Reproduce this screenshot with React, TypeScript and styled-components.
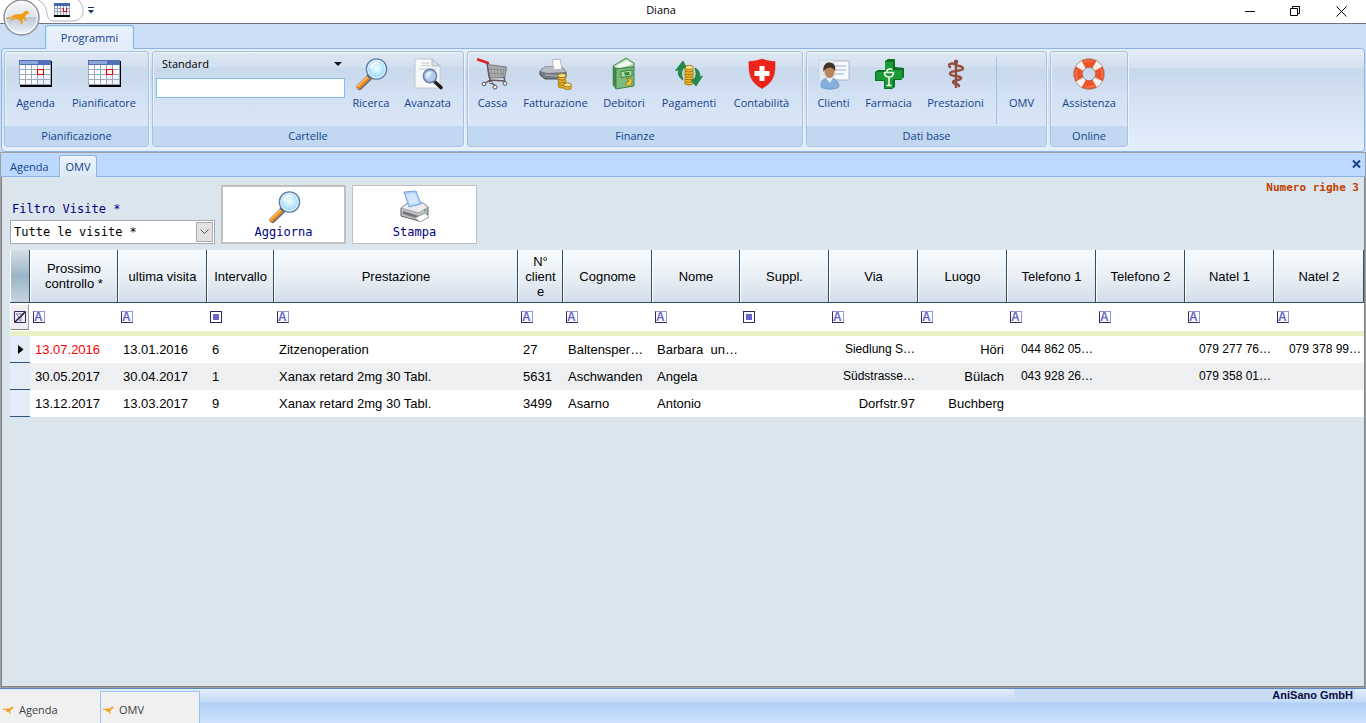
import React from 'react';
import styled, { createGlobalStyle, css } from 'styled-components';

const uiFont = '"Open Sans", "Noto Sans", sans-serif';
const monoFont = '"DejaVu Sans Mono", "Liberation Mono", monospace';
const gridFont = '"Liberation Sans", Arial, sans-serif';

const GlobalStyle = createGlobalStyle`
  *, *::before, *::after { box-sizing: border-box; }
  body { margin: 0; font-family: ${uiFont}; font-size: 11px; color: #15428b; background: #cbdef6; }
  button, input, select { font: inherit; color: inherit; margin: 0; padding: 0; border-radius: 0; }
  button { background: none; border: 0; cursor: pointer; }
  svg { display: block; flex: none; }
`;

const Window = styled.div`
  min-height: 100vh;
  display: flex;
  flex-direction: column;
  position: relative;
`;

/* ---------- title bar ---------- */

const TitleBar = styled.header`
  height: 24px;
  display: flex;
  background: #fff;
  border-bottom: 1px solid #6f7480;
`;

const QuickAccess = styled.div`
  width: 96px;
  display: flex;
  align-items: flex-start;
  padding-left: 38px;
`;

const QuickButton = styled.button`
  height: 22px;
  display: flex;
  align-items: center;
`;

const MoreButton = styled(QuickButton)`
  height: 20px;
  padding: 0 4px;
`;

const Title = styled.h1`
  flex: 1;
  margin: 0;
  font-size: 11px;
  font-weight: 400;
  line-height: 20px;
  text-align: center;
  color: #000;
`;

const WindowButtons = styled.div`
  display: flex;
  padding-right: 2px;
`;

const WindowButton = styled.button`
  width: 46px;
  display: flex;
  align-items: center;
  justify-content: center;
`;

const Orb = styled.button`
  position: absolute;
  left: 3px;
  top: 0;
  z-index: 2;
`;

/* ---------- ribbon ---------- */

const RibbonTabs = styled.nav`
  height: 24px;
  display: flex;
  align-items: flex-end;
  padding-left: 45px;
  background: #cbdef6;
`;

const RibbonTab = styled.button`
  height: 24px;
  margin-bottom: -1px;
  width: 89px;
  position: relative;
  line-height: 23px;
  white-space: nowrap;
  display: flex;
  justify-content: center;
  border: 1px solid #8db2e3;
  border-bottom: 0;
  border-radius: 3px 3px 0 0;
  background: linear-gradient(#e9f2fc, #e2ebf8);
  box-shadow: inset 1px 1px 0 #c8f0fa, inset -1px 0 0 #c8f0fa;
`;

const Ribbon = styled.section`
  margin: 0 1px;
  padding: 2px 2px 4px;
  display: flex;
  gap: 3px;
  border: 1px solid #8db2e3;
  border-radius: 4px;
  background: linear-gradient(#e6edf7 0, #d4e0f0 19px, #c7d8eb 20px, #d4e2f3 50%, #e4effd 100%);
`;

const Group = styled.section<{ $width: number }>`
  min-width: ${p => p.$width}px;
  height: 96px;
  display: flex;
  flex-direction: column;
  border: 1px solid #a5c3de;
  border-radius: 3px;
  background: linear-gradient(#dfe8f3 0, #d2dfef 15px, #c8d9eb 16px, #d2e1f3 45px, #dfebfb 100%);
  box-shadow: inset 1px 1px 0 #e9f1fa, 1px 1px 0 #edf4fd;
`;

const GroupBody = styled.div`
  flex: 1;
  display: flex;
  padding: 0 3px;
`;

const GroupCaption = styled.h2`
  margin: 0;
  height: 20px;
  font-size: 11px;
  font-weight: 400;
  line-height: 20px;
  text-align: center;
  background: #c1d8f0;
`;

const ToolButton = styled.button<{ $width: number }>`
  width: ${p => p.$width}px;
  padding-top: 6px;
  display: flex;
  flex-direction: column;
  align-items: center;
  gap: 5px;
  line-height: 16px;
  white-space: nowrap;
`;

const IconSlot = styled.span`
  width: 34px;
  height: 32px;
  display: flex;
  align-items: center;
  justify-content: center;
`;

const Divider = styled.span`
  width: 1px;
  margin: 5px 4px 2px 5px;
  background: #9dc4f2;
`;

const SearchBox = styled.div`
  width: 189px;
  margin-right: 2px;
  display: flex;
  flex-direction: column;
`;

const PlainSelectWrap = styled.label`
  height: 26px;
  display: flex;
  align-items: center;
  justify-content: space-between;
  padding: 0 3px 3px 6px;
`;

const PlainSelect = styled.select`
  flex: 1;
  appearance: none;
  border: 0;
  background: transparent;
  color: #000;
`;

const SearchInput = styled.input`
  height: 20px;
  width: 100%;
  padding: 0 4px;
  border: 1px solid #7cc0f0;
  background: #fff;
`;

/* ---------- document area ---------- */

const Frame = styled.main`
  flex: 1;
  display: flex;
  flex-direction: column;
  border: 1px solid #a0a0a0;
`;

const DocTabs = styled.nav`
  height: 24px;
  display: flex;
  align-items: flex-end;
  border-bottom: 1px solid #8db2e3;
  background: #bdd9ff;
`;

const DocTab = styled.button<{ $active?: boolean }>`
  height: 22px;
  line-height: 22px;
  padding: 0 6px;
  min-width: 38px;
  ${p => p.$active ? css`
    margin-bottom: -1px;
    border: 1px solid #8db2e3;
    border-bottom: 0;
    border-radius: 3px 3px 0 0;
    background: linear-gradient(#eaf3fd, #dde8f4);
    box-shadow: inset 1px 1px 0 #f4fbff;
    padding: 0 5px;
    line-height: 20px;
  ` : css`
    width: 58px;
    padding: 2px 11px 0 9px;
  `}
`;

const DocClose = styled.button`
  margin-left: auto;
  width: 18px;
  height: 24px;
  display: flex;
  align-items: center;
  justify-content: center;
`;

const Page = styled.div`
  flex: 1;
  border: 1px solid #848484;
  border-top: 0;
  background: #dbe5ed;
`;

const Toolbar = styled.div`
  min-height: 73px;
  display: flex;
  align-items: flex-end;
  gap: 6px;
  padding: 2px 5px 6px 8px;
  font-family: ${monoFont};
  font-size: 12px;
  color: #000080;
`;

const Filter = styled.div`
  width: 205px;
  display: flex;
  flex-direction: column;
  gap: 3px;
  line-height: 16px;
`;

const FilterLabel = styled.label`
  padding-left: 2px;
`;

const FilterSelectWrap = styled.div`
  height: 24px;
  display: flex;
  border: 1px solid #a9a9b0;
  background: #fff;
  padding: 1px;
`;

const FilterSelect = styled.select`
  flex: 1;
  appearance: none;
  border: 0;
  padding-left: 2px;
  background: #fff;
  color: #000;
`;

const DropArrow = styled.span`
  width: 17px;
  display: flex;
  align-items: center;
  justify-content: center;
  border: 1px solid #adadad;
  background: #e1e1e1;
`;

const ActionButton = styled.button<{ $default?: boolean }>`
  width: 125px;
  height: 59px;
  display: flex;
  flex-direction: column;
  align-items: center;
  justify-content: center;
  border: ${p => (p.$default ? 2 : 1)}px solid #c0c0c0;
  background: #fff;
  line-height: 16px;
`;

const RowCount = styled.output`
  margin-left: auto;
  align-self: flex-start;
  font-size: 11px;
  font-weight: 700;
  line-height: 18px;
  color: #c04000;
`;

/* ---------- grid ---------- */

const Table = styled.table`
  width: calc(100% - 8px);
  margin-left: 8px;
  table-layout: fixed;
  border-collapse: separate;
  border-spacing: 0;
  font-family: ${gridFont};
  font-size: 13px;
  color: #000;
  background: #fff;
`;

const HeadCell = styled.th`
  height: 53px;
  padding: 0 5px 0 6px;
  font-weight: 400;
  line-height: 15px;
  overflow-wrap: anywhere;
  border-right: 1px solid #2c4f6c;
  border-bottom: 1px solid #2c4f6c;
  background: linear-gradient(#f8fcfd, #e9eff5 50%, #d4ddea);
  box-shadow: inset 1px 0 0 #fff;
`;

const CornerCell = styled(HeadCell)`
  background: linear-gradient(#d3dfe6, #9bb5c7 50%, #c5d4df);
`;

const FilterCell = styled.td`
  height: 33px;
  padding: 0 3px 1px;
  border-bottom: 5px solid #e8f0c6;
`;

const FilterCorner = styled.td`
  height: 33px;
  padding: 0 1px 1px 0;
  border-bottom: 5px solid #e8f0c6;
`;

const ClearFilter = styled.button`
  width: 19px;
  height: 26px;
  display: flex;
  align-items: center;
  justify-content: center;
  background: #efefef;
  border: 1px solid #fff;
  border-right-color: #a0a0a0;
  border-bottom-color: #808080;
`;

const TextFilter = styled.button`
  width: 12px;
  height: 12px;
  display: block;
  border: 1px solid #9a94cf;
  border-left-color: #2b2b66;
  border-bottom-color: #2b2b66;
  color: #6a66cc;
  font-size: 12px;
  font-weight: 700;
  line-height: 10px;
  text-align: left;
`;

const ValueFilter = styled.button`
  width: 12px;
  height: 12px;
  display: block;
  border: 1px solid #2b2b66;
  background: #6a66cc content-box;
  padding: 2px;
`;

const Selector = styled.td`
  height: 27px;
  padding: 0 0 0 8px;
  background: #e4ecf7;
  border-bottom: 1px solid #2f5580;
`;

const Row = styled.tr`
  &:nth-child(even) { background: #eeeff1; }
`;

const Cell = styled.td<{ $right?: boolean; $due?: boolean; $small?: boolean }>`
  height: 27px;
  padding: ${p => (p.$right ? '0 3px 0 0' : '0 0 0 5px')};
  padding-bottom: ${p => (p.$small ? 2 : 0)}px;
  white-space: pre;
  text-align: ${p => (p.$right ? 'right' : 'left')};
  color: ${p => (p.$due ? '#f00' : '#000')};
  font-size: ${p => (p.$small ? 12 : 13)}px;
`;

/* ---------- status bar ---------- */

const StatusBar = styled.footer`
  height: 35px;
  display: flex;
  align-items: flex-start;
  border-top: 1px solid #5b86c0;
  background: linear-gradient(#e2edfb 0, #c4dbf8 13px, #b0cff6 14px, #cfe2fb 100%);
`;

const TaskButton = styled.button<{ $active?: boolean }>`
  width: 100px;
  height: 32px;
  margin-top: 2px;
  padding-left: 2px;
  display: flex;
  align-items: center;
  gap: 5px;
  padding-top: 4px;
  background: #f0f0f0;
  border: 1px solid ${p => (p.$active ? '#99c2f8' : '#f0f0f0')};
  border-bottom: 0;
  color: #404040;
`;

const Company = styled.p`
  width: 341px;
  margin: 0 11px 0 auto;
  padding-right: 2px;
  font-family: ${gridFont};
  font-size: 11px;
  font-weight: 700;
  line-height: 12px;
  text-align: right;
  color: #0a0a45;
  background: #c9def4;
`;

/* ---------- icons ---------- */

const SmallCheetah = () => (
  <svg width="11" height="8" viewBox="0 0 11 8" aria-hidden="true">
    <path fill="#f39c12" d="M0 2.800h4L7 2.600 8 1l2-.5.5 1.500-2 1L8 4.200 7 5l.5 2.500-1 .5-.8-2.600L3 5.800 3.600 4 0 3.800z" />
  </svg>
);

const OrbArt = () => (
  <svg width="37" height="36" viewBox="0 0 37 36" aria-hidden="true">
    <defs>
      <linearGradient id="orb" x1="0" y1="0" x2="0" y2="1">
        <stop offset="0" stopColor="#f7f8fa" /><stop offset=".48" stopColor="#dfe3ea" />
        <stop offset=".5" stopColor="#bcc6d6" /><stop offset="1" stopColor="#f4f8fd" />
      </linearGradient>
    </defs>
    <circle cx="18.5" cy="17.5" r="17.5" fill="url(#orb)" stroke="#8f8f93" strokeWidth="1.4" />
    <circle cx="18.5" cy="17.5" r="15.8" fill="none" stroke="#fff" strokeWidth="1.200" opacity=".8" />
    <path fill="#f39c12" d="M3 18.500 8 16.800 11.500 14.600 16 14.200 19.500 13.400 21.500 11.400 24 10.800 26.400 12.200 25.400 13.800 23.200 14.400 22 17 23.800 20.200 22.800 21 20.400 18.600 19.400 20 19.800 22.800 18 24.800 17.400 24 18 22.400 16.800 20.200 12.800 18.600 11 19.600 7.500 20.400 7 19.600 9.800 18.200 10.400 17 8.600 17.600 3.400 19.200z" />
  </svg>
);

const CalendarIcon = () => (
  <svg width="33" height="28" viewBox="0 0 33 28" aria-hidden="true">
    <path fill="#000" d="M1 25h31V1h1v26H1z" />
    <path fill="#fff" d="M0 5h32v20H0z" />
    <path fill="#e6eaf5" d="M18 15h14v10H18z" opacity=".7" />
    <path fill="#4f6fb6" d="M0 0h32v5H0z" />
    <path fill="#8fa6d8" d="M1 1h18v3H1z" />
    <path stroke="#9ba6bf" fill="none" d="M.5 5v20M6.500 5v20M12.500 5v20M18.500 5v20M24.500 5v20M31.500 5v20M0 9.500h32M0 14.500h32M0 19.500h32M0 24.500h32" />
    <path stroke="#e60000" strokeWidth="1.200" fill="#fff" d="M18.500 9.500h6v5h-6z" />
  </svg>
);

const MagnifierIcon = () => (
  <svg width="34" height="34" viewBox="0 0 34 34" aria-hidden="true">
    <defs>
      <radialGradient id="lens" cx=".5" cy=".45" r=".6">
        <stop offset="0" stopColor="#f2fdff" /><stop offset=".5" stopColor="#bfe9fc" /><stop offset="1" stopColor="#7fc4ee" />
      </radialGradient>
    </defs>
    <path d="M16 20 5.500 30" stroke="#6c6f80" strokeWidth="6" strokeLinecap="round" />
    <path d="M14.500 20.500 4.500 30" stroke="#f08a18" strokeWidth="4" strokeLinecap="round" />
    <path d="M13.500 20 4 29" stroke="#ffc46a" strokeWidth="1.500" strokeLinecap="round" />
    <path d="m14 20 3-3" stroke="#50597a" strokeWidth="4" />
    <circle cx="22.500" cy="12" r="10" fill="url(#lens)" stroke="#5d7eaa" strokeWidth="1.600" />
    <circle cx="22.500" cy="12" r="8.800" fill="none" stroke="#dff2fb" strokeWidth="1.200" />
    <path d="M17 10c1-3 4-5 7-4" fill="none" stroke="#fff" strokeWidth="2" strokeLinecap="round" />
  </svg>
);

const AdvancedIcon = () => (
  <svg width="32" height="34" viewBox="0 0 32 34" aria-hidden="true">
    <path d="M3 2h17l8 7v22H3z" fill="#f7f8f9" stroke="#c2c6cb" />
    <path d="M20 2v7h8z" fill="#d9dce1" stroke="#b4b8be" />
    <path d="M9 6h9M9 8.500h9M7 12h18" stroke="#c9cdd2" />
    <path d="m23 25 6 5.500" stroke="#1c1c20" strokeWidth="3.600" strokeLinecap="round" />
    <circle cx="18" cy="19" r="6.600" fill="#b3cdf0" stroke="#6f84a5" strokeWidth="1.600" />
    <path d="M13.500 18c1-3 4-4 7-3l-5 7z" fill="#dcebfb" />
  </svg>
);

const CartIcon = () => (
  <svg width="32" height="32" viewBox="0 0 32 32" fill="none" aria-hidden="true">
    <path d="m1 1.500 10 3.500" stroke="#e02020" strokeWidth="2.600" strokeLinecap="round" />
    <path d="M10 6.500 29.500 9 28 19.500l-16 .5z" fill="#b4b4b7" stroke="#77777b" />
    <path d="m13.500 8 1.500 11.500M17 8.500l1 11M20.500 8.500l.5 11M24 9v10M27 9l-1 10M11 11l18 1M11.500 15.500h17" stroke="#8c8c90" />
    <path d="m10 5 3 17-6 4M13 22l15 1M27 19l1 5M12 23l7 5" stroke="#66555a" strokeWidth="1.400" />
    <circle cx="7" cy="26" r="1.800" fill="#fff" stroke="#505058" /><circle cx="18" cy="29" r="2" fill="#fff" stroke="#505058" />
    <circle cx="28" cy="25.500" r="1.800" fill="#fff" stroke="#505058" /><circle cx="14" cy="24.500" r="1.300" fill="#fff" stroke="#505058" />
  </svg>
);

const Coins = ({ x, y, n, rx = 4 }: { x: number; y: number; n: number; rx?: number }) => (
  <g>
    {Array.from({ length: n }, (_, i) => (
      <ellipse key={i} cx={x} cy={y - i * 2.6} rx={rx} ry="2" fill={i === n - 1 ? '#ffe680' : '#f1b927'} stroke="#8a6212" strokeWidth=".8" />
    ))}
  </g>
);

const InvoiceIcon = () => (
  <svg width="34" height="32" viewBox="0 0 34 32" aria-hidden="true">
    <path d="m1 13 5-4 17 0 4 5v5l-4 2H6l-5-4z" fill="#777a80" stroke="#4d5056" />
    <path d="m1 13 5-4h17l4 5-19 1z" fill="#b9bcc2" />
    <path d="m13 2 8-1 2 10-8 1z" fill="#fdfdfd" stroke="#b3b7be" />
    <path d="m6 17 15 1" stroke="#a4a7ad" strokeWidth="1.500" />
    <Coins x={23} y={28} n={5} /><Coins x={28.500} y={29.500} n={2} />
  </svg>
);

const DebtorsIcon = () => (
  <svg width="30" height="34" viewBox="0 0 30 34" aria-hidden="true">
    <path d="M4 9 17 1l8 5v4L7 12z" fill="#a6d6a2" stroke="#4b8f4b" />
    <path d="m6 9 12-6 6 4-13 4z" fill="#f4f8f2" />
    <path d="m4 9 3 3v20l-3-4z" fill="#3f8a48" stroke="#35783c" strokeWidth=".5" />
    <path d="m7 12 18-2v19L7 32z" fill="#7cba7e" stroke="#3f8546" />
    <path d="m12 14.500 11-1.500v6l-11 1.500z" fill="#aee0a6" stroke="#387c3e" />
    <path d="m15 15.500 5-.5 1 3-5 .5z" fill="#398742" />
    <path d="M17 21c4 2 7-1 6 4s-5 5-6 2 3-1 3-3z" fill="#f0c53c" stroke="#94701c" strokeWidth=".8" />
  </svg>
);

const PaymentsIcon = () => (
  <svg width="30" height="30" viewBox="0 0 30 30" aria-hidden="true">
    <Coins x={15} y={24} n={7} rx={4.500} />
    <path d="M9 21C4 18 3.500 13 5 10.500L1.500 11.500 9 2l3 6-3 1.500C7 13 7.500 17 9 21z" fill="#1f8f4a" stroke="#12682f" strokeWidth=".7" />
    <path d="M21 9c4 2 5.500 6 4.500 9.500l3-1.500L22 27l-4.500-5.500 3-1.500c2-3 2-7 .5-11z" fill="#1f8f4a" stroke="#12682f" strokeWidth=".7" />
  </svg>
);

const SwissIcon = () => (
  <svg width="28" height="32" viewBox="0 0 28 32" aria-hidden="true">
    <path d="M1 3.500C5 3.500 10 2.500 14 1c4 1.500 9 2.500 13 2.500.5 13-1.500 21-13 27C2.500 24.500.5 16.500 1 3.500z" fill="#ee2418" stroke="#d01810" strokeWidth=".5" />
    <path d="M11.500 8h5v5h5v5h-5v5h-5v-5h-5v-5h5z" fill="#fff" />
  </svg>
);

const ClientsIcon = () => (
  <svg width="32" height="32" viewBox="0 0 32 32" aria-hidden="true">
    <path d="M2 3h29v19H2z" fill="#f6f8fb" stroke="#aeb7c4" />
    <path d="M17 8h11M17 12h11M17 16h9" stroke="#bcc8da" strokeWidth="1.500" />
    <path d="M1 2h15v21H1z" fill="#dfe8f0" stroke="#c0ccd8" strokeWidth=".6" />
    <path d="M3 29c0-7 3-9 8-9 6 0 10 3 10 9-4 3-13 3-18 0z" fill="#84aedb" stroke="#5b88b8" strokeWidth=".6" />
    <path d="m8 20 4 5 3-5z" fill="#e8f2fb" />
    <ellipse cx="11.500" cy="13.500" rx="5" ry="6.500" fill="#b98457" />
    <path d="M5.500 14C4.500 7 8 4.500 11.500 4.500s7 3 5.500 9c-1-3-3-4-5-4s-5 1-6.500 4.500z" fill="#3f3228" />
  </svg>
);

const PharmacyIcon = () => (
  <svg width="32" height="32" viewBox="0 0 32 32" aria-hidden="true">
    <path d="m12 3 3-2 7 0v8l9 1v9l-3 3h-6v7l-3 2h-8v-8H2v-9l3-2h7z" fill="#0a7022" />
    <path d="M12 4h8v8h9v9h-9v9h-8v-8H3v-8h9z" fill="#1a9a38" />
    <path d="M11.500 14.500h9c0 3.500-2 4.500-4.500 4.500s-4.500-1-4.500-4.500z" fill="none" stroke="#e6f5dc" strokeWidth="1.600" />
    <path d="M16 19v8M13.500 27.500h5M14 14c-1-3 5-4 5-2" fill="none" stroke="#f2f8d8" strokeWidth="1.600" />
  </svg>
);

const SnakeIcon = () => (
  <svg width="20" height="30" viewBox="0 0 20 30" fill="none" aria-hidden="true">
    <path d="M10 2v27" stroke="#8f4c40" strokeWidth="2.400" />
    <circle cx="10" cy="2.800" r="2.200" fill="#8f4c40" />
    <path d="M4 8C1 5 6 3.500 9 5.500s8 1 8 4-13 1.500-13 5 11 1.500 11 4.500-8 1.500-8 4 6 1.500 6 4" stroke="#96503f" strokeWidth="2.500" strokeLinecap="round" />
  </svg>
);

const LifebuoyIcon = () => (
  <svg width="34" height="34" viewBox="0 0 34 34" fill="none" aria-hidden="true">
    <circle cx="17" cy="17" r="11" stroke="#8f3a26" strokeWidth="9" />
    <circle cx="17" cy="17" r="11" stroke="#ee5228" strokeWidth="8" />
    <circle cx="17" cy="17" r="11" stroke="#f3f1ef" strokeWidth="8.600" strokeDasharray="6 11.280" transform="rotate(28 17 17)" />
    <circle cx="17" cy="17" r="13" stroke="#ff9c78" strokeWidth="1" strokeDasharray="10 10.420" transform="rotate(62 17 17)" opacity=".7" />
    <circle cx="17" cy="17" r="15.400" stroke="#b9a9a4" strokeWidth=".6" />
    <circle cx="17" cy="17" r="6.600" stroke="#a48a82" strokeWidth=".6" />
  </svg>
);

const PrinterIcon = () => (
  <svg width="32" height="34" viewBox="0 0 32 34" aria-hidden="true">
    <path d="m2 18 7-5 15 0 5 4v8l-9 6L2 26z" fill="#bfc0c3" stroke="#5f6064" />
    <path d="m2 18 7-5h15l5 4-9 6z" fill="#ececee" stroke="#8b8c90" strokeWidth=".7" />
    <path d="m5 2 12-1 5 13-12 3z" fill="#a9cffb" stroke="#7ba6dc" />
    <path d="m7 4 9-1 4 10-9 2z" fill="#d3e7fe" />
    <path d="m4 21 16 5v3L4 24z" fill="#77787c" />
    <path d="m16 28 10-5 4 4-9 5z" fill="#fff" stroke="#9a9ba0" />
    <circle cx="26" cy="20.500" r="1.100" fill="#3cc23c" />
  </svg>
);

/* ---------- data ---------- */

type Tool = { label: string; width: number; icon?: React.ReactNode; divided?: boolean };
type GroupData = { caption: string; width: number; tools: Tool[]; search?: boolean };

const groups: GroupData[] = [
  { caption: 'Pianificazione', width: 145, tools: [
    { label: 'Agenda', width: 55, icon: <CalendarIcon /> },
    { label: 'Pianificatore', width: 82, icon: <CalendarIcon /> },
  ] },
  { caption: 'Cartelle', width: 312, search: true, tools: [
    { label: 'Ricerca', width: 48, icon: <MagnifierIcon /> },
    { label: 'Avanzata', width: 65, icon: <AdvancedIcon /> },
  ] },
  { caption: 'Finanze', width: 336, tools: [
    { label: 'Cassa', width: 43, icon: <CartIcon /> },
    { label: 'Fatturazione', width: 83, icon: <InvoiceIcon /> },
    { label: 'Debitori', width: 54, icon: <DebtorsIcon /> },
    { label: 'Pagamenti', width: 76, icon: <PaymentsIcon /> },
    { label: 'Contabilità', width: 69, icon: <SwissIcon /> },
  ] },
  { caption: 'Dati base', width: 241, tools: [
    { label: 'Clienti', width: 47, icon: <ClientsIcon /> },
    { label: 'Farmacia', width: 63, icon: <PharmacyIcon /> },
    { label: 'Prestazioni', width: 71, icon: <SnakeIcon /> },
    { label: 'OMV', width: 41, divided: true },
  ] },
  { caption: 'Online', width: 78, tools: [
    { label: 'Assistenza', width: 70, icon: <LifebuoyIcon /> },
  ] },
];

type Column = { title: string; width?: number; value?: boolean; right?: boolean };

const columns: Column[] = [
  { title: 'Prossimo controllo *', width: 88 },
  { title: 'ultima visita', width: 89 },
  { title: 'Intervallo', width: 67, value: true },
  { title: 'Prestazione' },
  { title: 'N° cliente', width: 45 },
  { title: 'Cognome', width: 89 },
  { title: 'Nome', width: 88 },
  { title: 'Suppl.', width: 89, value: true },
  { title: 'Via', width: 89, right: true },
  { title: 'Luogo', width: 89, right: true },
  { title: 'Telefono 1', width: 89, right: true },
  { title: 'Telefono 2', width: 89, right: true },
  { title: 'Natel 1', width: 89, right: true },
  { title: 'Natel 2', width: 90, right: true },
];

const rows = [
  ['13.07.2016', '13.01.2016', '6', 'Zitzenoperation', '27', 'Baltensper…', 'Barbara  un…', '', 'Siedlung S…', 'Höri', '044 862 05…', '', '079 277 76…', '079 378 99…'],
  ['30.05.2017', '30.04.2017', '1', 'Xanax retard 2mg 30 Tabl.', '5631', 'Aschwanden', 'Angela', '', 'Südstrasse…', 'Bülach', '043 928 26…', '', '079 358 01…', ''],
  ['13.12.2017', '13.03.2017', '9', 'Xanax retard 2mg 30 Tabl.', '3499', 'Asarno', 'Antonio', '', 'Dorfstr.97', 'Buchberg', '', '', '', ''],
];

export default function App() {
  return (
    <Window>
      <GlobalStyle />
      <Orb aria-label="Menu Diana"><OrbArt /></Orb>
      <TitleBar>
        <QuickAccess>
          <QuickButton aria-label="Agenda">
            <svg width="46" height="22" viewBox="0 0 46 22" aria-hidden="true">
              <path d="M0 0c6 3 8 7 9 14 1 5 3 7 7 7h18c7 0 11-4 11-10 0-5-2-9-5-11" fill="none" stroke="#b3b3b8" />
              <g transform="translate(16 3)">
                <path fill="#000" d="M0 12h16v2H0z" /><path fill="#f2f4fa" d="M0 0h16v12H0z" />
                <path fill="#4668ad" d="M0 0h16v3H0z" />
                <path stroke="#9aa3b8" fill="none" d="M.5 3v9M3.500 3v9M6.500 3v9M9.500 3v9M12.500 3v9M15.500 3v9M0 5.500h16M0 8.500h16" />
                <path stroke="#e00000" fill="#fff" d="M9.500 5v3.500h3V5" />
              </g>
            </svg>
          </QuickButton>
          <MoreButton aria-label="Personalizza">
            <svg width="6" height="7" viewBox="0 0 6 7"><path fill="#15306b" d="M0 0h6v1H0zM0 3h6L3 6.500z" /></svg>
          </MoreButton>
        </QuickAccess>
        <Title>Diana</Title>
        <WindowButtons>
          <WindowButton aria-label="Riduci a icona">
            <svg width="11" height="11"><path d="M1 5.500h10" stroke="#000" /></svg>
          </WindowButton>
          <WindowButton aria-label="Ripristina">
            <svg width="11" height="11" fill="none" stroke="#000"><path d="M.5 2.500h7v7h-7zM2.500 2V.5h7v7H8" /></svg>
          </WindowButton>
          <WindowButton aria-label="Chiudi">
            <svg width="11" height="11"><path d="m.5.5 10 10m0-10-10 10" stroke="#000" /></svg>
          </WindowButton>
        </WindowButtons>
      </TitleBar>

      <RibbonTabs><RibbonTab>Programmi</RibbonTab></RibbonTabs>
      <Ribbon>
        {groups.map(g => (
          <Group key={g.caption} $width={g.width}>
            <GroupBody>
              {g.search && (
                <SearchBox>
                  <PlainSelectWrap>
                    <PlainSelect aria-label="Tipo di ricerca"><option>Standard</option></PlainSelect>
                    <svg width="8" height="4"><path d="M0 0h8L4 4z" fill="#111" /></svg>
                  </PlainSelectWrap>
                  <SearchInput type="text" aria-label="Cerca cartella" />
                </SearchBox>
              )}
              {g.tools.map(t => (
                <React.Fragment key={t.label}>
                  {t.divided && <Divider />}
                  <ToolButton $width={t.width}><IconSlot>{t.icon}</IconSlot>{t.label}</ToolButton>
                </React.Fragment>
              ))}
            </GroupBody>
            <GroupCaption>{g.caption}</GroupCaption>
          </Group>
        ))}
      </Ribbon>

      <Frame>
        <DocTabs>
          <DocTab>Agenda</DocTab>
          <DocTab $active>OMV</DocTab>
          <DocClose aria-label="Chiudi scheda">
            <svg width="9" height="8"><path d="m1 .5 7 7m0-7-7 7" stroke="#15428b" strokeWidth="2" /></svg>
          </DocClose>
        </DocTabs>
        <Page>
          <Toolbar>
            <Filter>
              <FilterLabel htmlFor="visite">Filtro Visite *</FilterLabel>
              <FilterSelectWrap>
                <FilterSelect id="visite"><option>Tutte le visite *</option></FilterSelect>
                <DropArrow>
                  <svg width="9" height="6"><path d="m.5.500 4 4 4-4" fill="none" stroke="#555" /></svg>
                </DropArrow>
              </FilterSelectWrap>
            </Filter>
            <ActionButton $default><MagnifierIcon />Aggiorna</ActionButton>
            <ActionButton><PrinterIcon />Stampa</ActionButton>
            <RowCount>Numero righe 3</RowCount>
          </Toolbar>
          <Table>
            <colgroup>
              <col width={20} />
              {columns.map(c => <col key={c.title} width={c.width} />)}
            </colgroup>
            <thead>
              <tr>
                <CornerCell aria-label="Selezione" />
                {columns.map(c => <HeadCell key={c.title} scope="col">{c.title}</HeadCell>)}
              </tr>
              <tr>
                <FilterCorner>
                  <ClearFilter aria-label="Rimuovi filtri">
                    <svg width="12" height="12" fill="none">
                      <path d="M.5.500h11v11H.5z" stroke="#2b2b66" />
                      <path d="M2 3h8L7 6v4L5 9V6z" stroke="#7a76cc" /><path d="M1 11 11 1" stroke="#222" strokeWidth="1.500" />
                    </svg>
                  </ClearFilter>
                </FilterCorner>
                {columns.map(c => (
                  <FilterCell key={c.title}>
                    {c.value
                      ? <ValueFilter aria-label={`Filtro ${c.title}`} />
                      : <TextFilter aria-label={`Filtro ${c.title}`}>A</TextFilter>}
                  </FilterCell>
                ))}
              </tr>
            </thead>
            <tbody>
              {rows.map((r, i) => (
                <Row key={r[0]}>
                  <Selector>
                    {i === 0 && <svg width="6" height="9"><path d="M0 0v9l5.500-4.500z" fill="#000" /></svg>}
                  </Selector>
                  {r.map((text, c) => (
                    <Cell
                      key={columns[c].title}
                      $right={columns[c].right}
                      $due={i === 0 && c === 0}
                      $small={columns[c].right && text.endsWith('…')}
                    >{text}</Cell>
                  ))}
                </Row>
              ))}
            </tbody>
          </Table>
        </Page>
      </Frame>

      <StatusBar>
        <TaskButton><SmallCheetah />Agenda</TaskButton>
        <TaskButton $active><SmallCheetah />OMV</TaskButton>
        <Company>AniSano GmbH</Company>
      </StatusBar>
    </Window>
  );
}
